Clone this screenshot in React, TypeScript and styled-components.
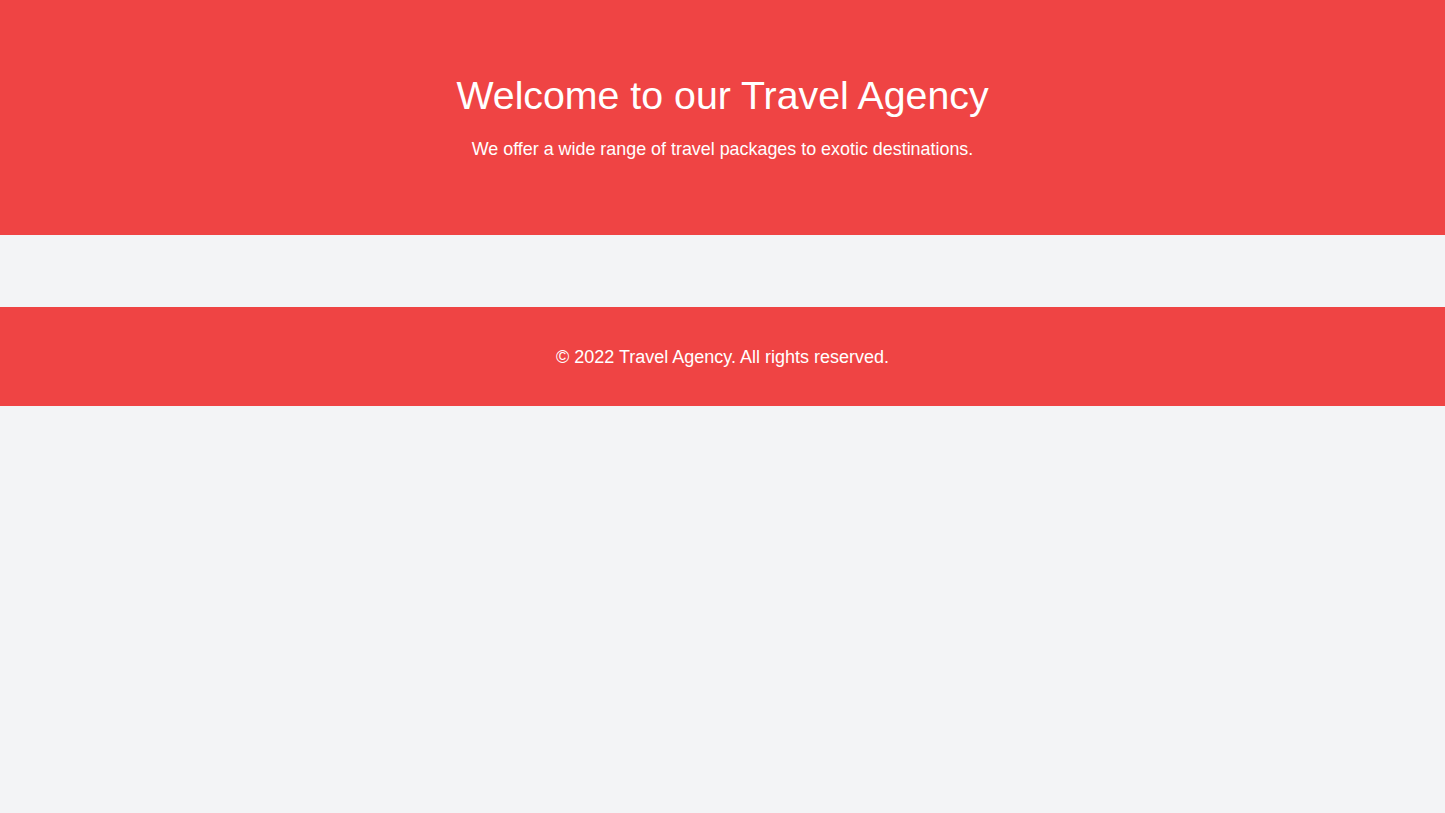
import React from 'react';
import styled, { createGlobalStyle } from 'styled-components';

const GlobalStyle = createGlobalStyle`
  html, body {
    margin: 0;
    padding: 0;
    background-color: #f3f4f6;
    font-family: "Liberation Sans", Arial, sans-serif;
  }
`;

const Page = styled.div`
  min-height: 100vh;
  background-color: #f3f4f6;
`;

const Hero = styled.header`
  background-color: #ef4444;
  color: #ffffff;
  text-align: center;
  padding: 74px 16px 72px;
  height: 235px;
  box-sizing: border-box;
`;

const Title = styled.h1`
  margin: 0 0 19px;
  font-size: 39.3px;
  line-height: 42px;
  font-weight: 400;
`;

const Subtitle = styled.p`
  margin: 0;
  font-size: 17.9px;
  line-height: 28px;
`;

const Main = styled.main`
  height: 72px;
`;

const Footer = styled.footer`
  background-color: #ef4444;
  color: #ffffff;
  text-align: center;
  height: 99px;
  display: flex;
  align-items: center;
  justify-content: center;
`;

const FooterText = styled.p`
  margin: 0;
  font-size: 18px;
  line-height: 28px;
`;

const App: React.FC = () => {
  return (
    <Page>
      <GlobalStyle />
      <Hero>
        <Title>Welcome to our Travel Agency</Title>
        <Subtitle>We offer a wide range of travel packages to exotic destinations.</Subtitle>
      </Hero>
      <Main />
      <Footer>
        <FooterText>© 2022 Travel Agency. All rights reserved.</FooterText>
      </Footer>
    </Page>
  );
};

export default App;
